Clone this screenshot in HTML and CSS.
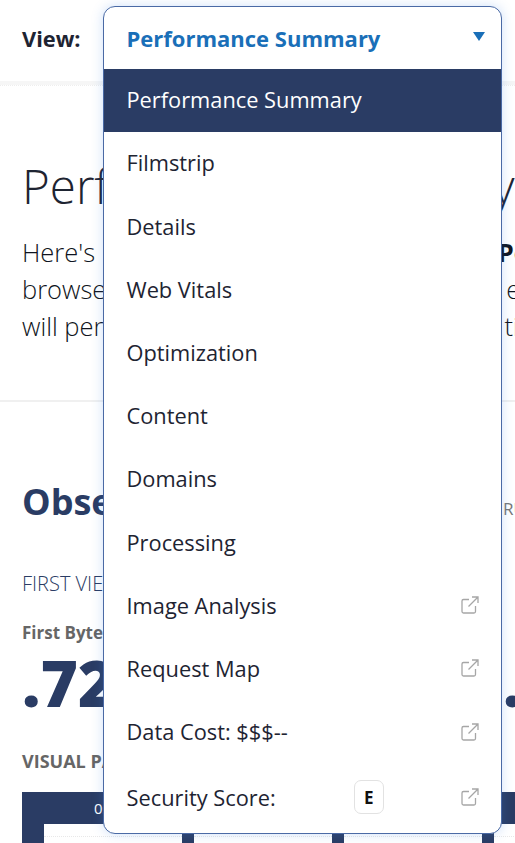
FILE: index.html
```html
<!DOCTYPE html>
<html lang="en">
<head>
    <meta charset="UTF-8">
    <meta name="viewport" content="width=device-width, initial-scale=1.0">
    <title>Performance Summary</title>
    <link rel="stylesheet" href="styles.css">
</head>
<body>
    <div class="viewbar">
        <label class="viewbar-label">View:</label>
        <div class="view-select">
            <div class="view-current">
                <span>Performance Summary</span>
                <span class="caret"></span>
            </div>
            <ul class="view-menu">
                <li class="selected">Performance Summary</li>
                <li>Filmstrip</li>
                <li>Details</li>
                <li>Web Vitals</li>
                <li>Optimization</li>
                <li>Content</li>
                <li>Domains</li>
                <li>Processing</li>
                <li>Image Analysis
                    <svg class="ext" viewBox="0 0 18 18"><path d="M8 3.500H2.500A1.500 1.500 0 0 0 1 5v10.500A1.500 1.500 0 0 0 2.500 17H13a1.500 1.500 0 0 0 1.500-1.500V10M7.500 10.500 16.500 1.500M11 1h6v6"/></svg>
                </li>
                <li>Request Map
                    <svg class="ext" viewBox="0 0 18 18"><path d="M8 3.500H2.500A1.500 1.500 0 0 0 1 5v10.500A1.500 1.500 0 0 0 2.500 17H13a1.500 1.500 0 0 0 1.500-1.500V10M7.500 10.500 16.500 1.500M11 1h6v6"/></svg>
                </li>
                <li>Data Cost: $$$--
                    <svg class="ext" viewBox="0 0 18 18"><path d="M8 3.500H2.500A1.500 1.500 0 0 0 1 5v10.500A1.500 1.500 0 0 0 2.500 17H13a1.500 1.500 0 0 0 1.500-1.500V10M7.500 10.500 16.500 1.500M11 1h6v6"/></svg>
                </li>
                <li class="security">
                    <span>Security Score:</span>
                    <span class="grade">E</span>
                    <svg class="ext" viewBox="0 0 18 18"><path d="M8 3.500H2.500A1.500 1.500 0 0 0 1 5v10.500A1.500 1.500 0 0 0 2.500 17H13a1.500 1.500 0 0 0 1.500-1.500V10M7.500 10.500 16.500 1.500M11 1h6v6"/></svg>
                </li>
            </ul>
        </div>
    </div>

    <div class="intro">
        <h1>Performance Summary</h1>
        <p>Here's <a href="#">how this page</a> has performed by a <strong>Performance</strong> test<br>
        browser on a slow network, and how your experience<br>
        will perform for your regular users at high times.</p>
    </div>

    <div class="metrics">
        <div class="metrics-head">
            <h2>Observed Metrics</h2>
            <span class="metrics-note">RUN</span>
        </div>
        <h3>First View</h3>
        <div class="metric-row">
            <div class="metric">
                <div class="metric-name">First Byte</div>
                <div class="metric-value">.72S</div>
            </div>
            <div class="metric">
                <div class="metric-name">&nbsp;</div>
                <div class="metric-value">.90S</div>
            </div>
        </div>
        <h4>Visual Page Loading Progress</h4>
        <div class="filmstrip">
            <div class="filmstrip-times">
                <span>0s</span>
            </div>
            <div class="filmstrip-frames">
                <div class="frame"></div>
                <div class="frame"></div>
                <div class="frame"></div>
                <div class="frame"></div>
            </div>
        </div>
    </div>
</body>
</html>
```

FILE: styles.css
```css
html, body { margin: 0; height: 843px; overflow: hidden; }
body { font-family: "Open Sans", sans-serif; background-color: #fff; color: #1e2432; position: relative; }

.viewbar { height: 81px; padding-left: 22px; display: flex; align-items: center; background-color: #fff; border-bottom: 4px solid #f6f6f6; }
.viewbar-label { font-size: 21.8px; font-weight: 700; line-height: 26px; margin-top: -4px; }

.view-select { position: absolute; left: 103px; top: 6px; width: 399px; height: 828px; box-sizing: border-box; border: 1px solid #4a6aa5; border-radius: 12px; background-color: #fff; box-shadow: 0 0 12px rgba(60,130,230,0.25); overflow: hidden; z-index: 10; }
.view-current { height: 62px; padding: 0 16px 0 22.500px; display: flex; justify-content: space-between; align-items: center; color: #1a6fb8; font-size: 22px; font-weight: 700; }
.caret { width: 0; height: 0; border-left: 6px solid transparent; border-right: 6px solid transparent; border-top: 9px solid #1a6fb8; margin-top: -3px; }

.view-menu { list-style: none; margin: 0; padding: 0; }
.view-menu li { height: 63.2px; padding: 0 22px 1.700px 22.500px; display: flex; justify-content: space-between; align-items: center; font-size: 21.8px; color: #1e2432; box-sizing: border-box; }
.view-menu li.selected { background-color: #2a3c64; color: #fff; }
.view-menu li.security { justify-content: flex-start; height: 66px; padding-top: 2px; padding-bottom: 2px; }
.grade { width: 30px; height: 34px; margin-left: 78px; margin-right: auto; border: 1px solid #e2e2e2; border-radius: 7px; display: flex; align-items: center; justify-content: center; font-size: 17px; font-weight: 700; color: #111; box-sizing: border-box; }
.ext { width: 18px; height: 18px; fill: none; stroke: #a6a6a6; stroke-width: 1.300; }

.intro { padding: 69px 22px 0; height: 245px; border-top: 1px dotted #eee; border-bottom: 2px solid #f0f0f0; overflow: hidden; }
.intro h1 { margin: 0 0 17px; font-size: 47.500px; font-weight: 300; line-height: 62px; white-space: nowrap; color: #1e2432; }
.intro p { margin: 0; font-size: 25.500px; font-weight: 300; line-height: 37px; white-space: nowrap; color: #0f1420; }
.intro a { color: #1b2fa0; text-decoration: none; }
.intro strong { font-weight: 700; }

.metrics { padding: 72px 0 0 22px; }
.metrics-head { display: flex; align-items: flex-end; }
.metrics-head h2 { margin: 0; width: 481px; flex-shrink: 0; font-size: 36px; font-weight: 700; line-height: 56px; color: #2a3c64; white-space: nowrap; }
.metrics-note { font-size: 17px; color: #777; margin-bottom: 10px; white-space: nowrap; }
.metrics h3 { margin: 40px 0 0; font-size: 20px; font-weight: 300; line-height: 28px; text-transform: uppercase; color: #2a3c64; }
.metric-row { display: flex; }
.metric { width: 481px; flex-shrink: 0; }
.metric-name { margin-top: 23px; font-size: 17px; font-weight: 700; line-height: 24px; color: #666; white-space: nowrap; }
.metric-value { font-size: 64px; font-weight: 800; line-height: 76px; color: #2a3c64; white-space: nowrap; }
.metrics h4 { margin: 27px 0 0; font-size: 18px; font-weight: 700; line-height: 26px; text-transform: uppercase; color: #666; white-space: nowrap; }

.filmstrip { margin-top: 18px; width: 640px; background-color: #2a3c64; }
.filmstrip-times { height: 32px; padding-left: 72px; font-size: 15px; line-height: 32px; color: #fff; }
.filmstrip-frames { display: flex; gap: 12px; padding-left: 22px; height: 60px; }
.frame { width: 138px; flex-shrink: 0; background-color: #fff; }
.frame::before { content: ""; display: block; margin-top: 12px; border-top: 1px dotted #e8e8e8; }
```
